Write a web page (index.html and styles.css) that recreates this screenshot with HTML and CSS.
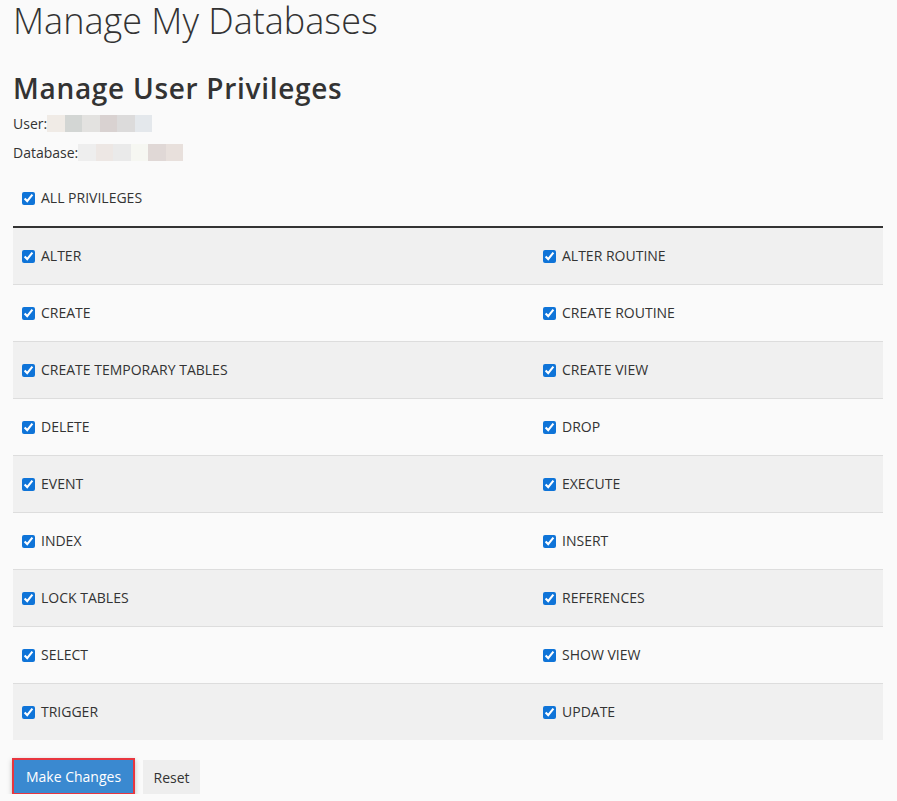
FILE: index.html
```html
<!DOCTYPE html>
<html lang="en">
<head>
    <meta charset="UTF-8" />
    <title>Manage My Databases</title>
    <link rel="stylesheet" href="styles.css">
</head>
<body>
    <h1>Manage My Databases</h1>
    <h2>Manage User Privileges</h2>

    <div class="info-line">
        <span>User:</span>
        <span class="blur">
            <i style="background:#f0ebe6"></i><i style="background:#d3d6d4"></i><i style="background:#e3e2e0"></i><i style="background:#d9d2d1"></i><i style="background:#dcdbdb"></i><i style="background:#e4e8ec"></i>
        </span>
    </div>
    <div class="info-line">
        <span>Database:</span>
        <span class="blur">
            <i style="background:#eeeeee"></i><i style="background:#ede7e4"></i><i style="background:#eaeaea"></i><i style="background:#f6f7f2"></i><i style="background:#e0d8d6"></i><i style="background:#e8e0dc"></i>
        </span>
    </div>

    <form>
        <div class="all-row">
            <label class="priv"><input type="checkbox" checked /> ALL PRIVILEGES</label>
        </div>

        <div class="priv-table">
            <div class="priv-row">
                <label class="priv"><input type="checkbox" checked /> ALTER</label>
                <label class="priv"><input type="checkbox" checked /> ALTER ROUTINE</label>
            </div>
            <div class="priv-row">
                <label class="priv"><input type="checkbox" checked /> CREATE</label>
                <label class="priv"><input type="checkbox" checked /> CREATE ROUTINE</label>
            </div>
            <div class="priv-row">
                <label class="priv"><input type="checkbox" checked /> CREATE TEMPORARY TABLES</label>
                <label class="priv"><input type="checkbox" checked /> CREATE VIEW</label>
            </div>
            <div class="priv-row">
                <label class="priv"><input type="checkbox" checked /> DELETE</label>
                <label class="priv"><input type="checkbox" checked /> DROP</label>
            </div>
            <div class="priv-row">
                <label class="priv"><input type="checkbox" checked /> EVENT</label>
                <label class="priv"><input type="checkbox" checked /> EXECUTE</label>
            </div>
            <div class="priv-row">
                <label class="priv"><input type="checkbox" checked /> INDEX</label>
                <label class="priv"><input type="checkbox" checked /> INSERT</label>
            </div>
            <div class="priv-row">
                <label class="priv"><input type="checkbox" checked /> LOCK TABLES</label>
                <label class="priv"><input type="checkbox" checked /> REFERENCES</label>
            </div>
            <div class="priv-row">
                <label class="priv"><input type="checkbox" checked /> SELECT</label>
                <label class="priv"><input type="checkbox" checked /> SHOW VIEW</label>
            </div>
            <div class="priv-row">
                <label class="priv"><input type="checkbox" checked /> TRIGGER</label>
                <label class="priv"><input type="checkbox" checked /> UPDATE</label>
            </div>
        </div>

        <div class="actions">
            <button type="button" class="btn btn-primary">Make Changes</button>
            <button type="button" class="btn btn-default">Reset</button>
        </div>
    </form>
</body>
</html>
```

FILE: styles.css
```css
body {
    margin: 0;
    padding: 1px 14px 0 13px;
    background-color: #fafafa;
    font-family: "Open Sans", sans-serif;
    font-size: 14px;
    color: #333;
}

h1 {
    margin: 0;
    font-size: 36px;
    font-weight: 300;
    line-height: 40px;
    color: #333;
}

h2 {
    margin: 30px 0 8px 0;
    font-size: 28px;
    font-weight: 600;
    letter-spacing: 0.7px;
    line-height: 34px;
    color: #333;
}

.info-line {
    display: flex;
    align-items: center;
    height: 20px;
    margin-bottom: 9px;
}

.blur {
    display: flex;
    height: 17px;
}

.blur i {
    display: block;
    width: 17.5px;
    height: 17px;
}

.all-row {
    padding: 17px 0 18px 0;
}

.priv {
    display: flex;
    align-items: center;
    padding-left: 9px;
    line-height: 20px;
    white-space: nowrap;
}

.priv input {
    width: 13px;
    height: 13px;
    margin: 0 6px 0 0;
    accent-color: #0f74d8;
}

.priv-table {
    border-top: 2px solid #333;
}

.priv-row {
    display: grid;
    grid-template-columns: 521px 1fr;
    align-items: center;
    height: 56px;
    background-color: #fafafa;
    border-top: 1px solid #dddddd;
}

.priv-row:first-child {
    border-top: none;
}

.priv-row:nth-child(odd) {
    background-color: #f0f0f0;
}

.actions {
    display: flex;
    align-items: flex-start;
    gap: 10px;
    margin-top: 20px;
}

.btn {
    font-family: "Open Sans", sans-serif;
    font-size: 14px;
    border: none;
    cursor: pointer;
}

.btn-primary {
    margin-left: 1px;
    width: 119px;
    height: 33px;
    background-color: #3a89d0;
    color: #fff;
    outline: 2px solid #e8363f;
    box-shadow: 0 2px 5px 2px rgba(0, 0, 0, 0.25);
}

.btn-default {
    width: 57px;
    height: 34px;
    background-color: #eeeeee;
    color: #333;
}
```
